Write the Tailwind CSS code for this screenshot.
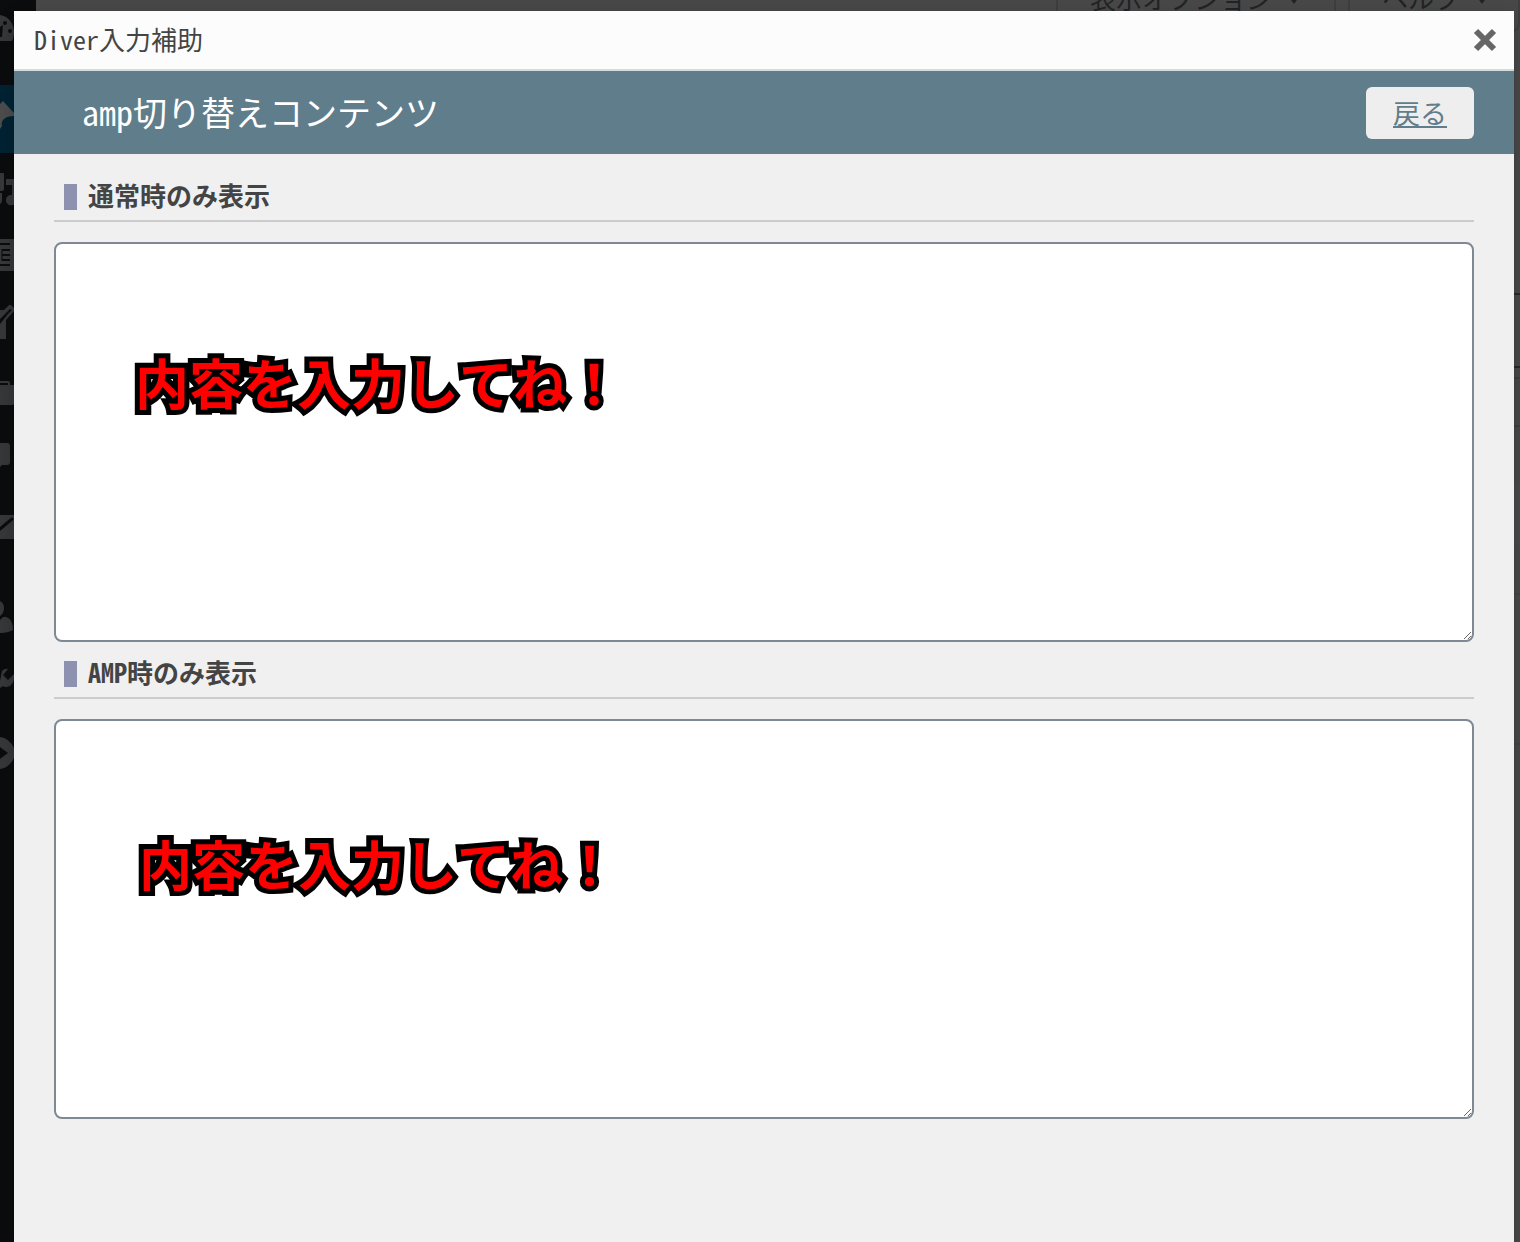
<!DOCTYPE html>
<html lang="ja">
<head>
  <meta charset="UTF-8" />
  <meta name="viewport" content="width=device-width, initial-scale=1.0"/>
  <title>Diver入力補助</title>
  <script src="https://cdn.jsdelivr.net/npm/@tailwindcss/browser@4"></script>
</head>
<body class="relative h-screen overflow-hidden bg-[#f1f1f1] text-[26px] leading-[36px] text-[#444] font-['Noto_Sans_Mono_CJK_JP','Noto_Sans_CJK_JP',sans-serif]">

  <!-- Admin screen -->
  <div class="flex h-full">
    <aside class="w-9 shrink-0 bg-[#23282d] text-[#b4b9be]">
      <ul>
        <li class="h-[63px] mb-[22px]">
          <svg class="w-[14px] h-[63px]" viewBox="0 0 14 63" fill="currentColor"><path d="M0 15C8 16 14 23 14 32C14 36 13 39 12 41H0V37H2L3 25L0 27Z"/><circle cx="5" cy="23" r="2" fill="#23282d"/><circle cx="10" cy="31" r="2" fill="#23282d"/></svg>
        </li>
        <li class="h-[68px] bg-[#0073aa] text-white">
          <svg class="w-[14px] h-[68px]" viewBox="0 0 14 68" fill="currentColor"><path d="M0 19L3 16L14 28V31C9 31 6 32 4 34C2 36 1 38 2 41L0 44Z"/></svg>
        </li>
        <li class="h-[68px]">
          <svg class="w-[14px] h-[68px]" viewBox="0 0 14 68" fill="currentColor"><path d="M0 20H3Q4 20 4 21V36Q4 38 2 38H0ZM6 26H14V52C9 53 6 51 6 47C6 44 8 42 12 42V32H6ZM0 40H2V47Q2 50 0 51Z"/></svg>
        </li>
        <li class="h-[68px]">
          <svg class="w-[14px] h-[68px]" viewBox="0 0 14 68" fill="currentColor"><path d="M0 18H14V50H0Z"/><path d="M0 23H10M2 29H10M2 34H10M2 39H10M0 44H10" stroke="#23282d" stroke-width="2"/><path d="M2 28V40" stroke="#23282d" stroke-width="1"/></svg>
        </li>
        <li class="h-[68px]">
          <svg class="w-[14px] h-[68px]" viewBox="0 0 14 68" fill="currentColor"><path d="M0 21H4L9 16L11 16L14 19V22L6 31V50H0V35L8 25L12 21L10 20L0 30Z"/></svg>
        </li>
        <li class="h-[68px]">
          <svg class="w-[14px] h-[68px]" viewBox="0 0 14 68" fill="currentColor"><path d="M0 24H8Q10 24 10 26V28H14V47Q14 48 12 48H0V28H8V26H0Z"/></svg>
        </li>
        <li class="h-[68px]">
          <svg class="w-[14px] h-[68px]" viewBox="0 0 14 68" fill="currentColor"><path d="M0 18H7Q10 18 10 21V37Q10 40 7 40H2L0 42Z"/></svg>
        </li>
        <li class="h-[68px] mb-[22px]">
          <svg class="w-[14px] h-[68px]" viewBox="0 0 14 68" fill="currentColor"><path d="M0 22H14V46H0Z"/><path d="M12 26L0 36" stroke="#23282d" stroke-width="3" stroke-linecap="round"/></svg>
        </li>
        <li class="h-[68px]">
          <svg class="w-[14px] h-[68px]" viewBox="0 0 14 68" fill="currentColor"><path d="M0 18Q4 20 4 25Q4 30 0 33ZM0 37Q3 33 6 34Q13 36 13 47Q8 50 0 50Z"/></svg>
        </li>
        <li class="h-[68px]">
          <svg class="w-[14px] h-[68px]" viewBox="0 0 14 68" fill="currentColor"><path d="M2 20Q5 17 8 18L3 24L8 29L14 23Q15 31 10 35Q5 37 3 35L0 37V30Z"/></svg>
        </li>
        <li class="h-[68px]">
          <svg class="w-[14px] h-[68px]" viewBox="0 0 14 68" fill="currentColor"><path d="M0 18Q9 19 14 29V39Q9 49 0 50V40L8 34L0 28Z"/></svg>
        </li>
      </ul>
    </aside>
    <main class="flex-1 min-w-0">
      <div class="flex justify-end gap-3 h-16 -mt-8 text-[#72777c]">
        <button class="flex items-center justify-between w-[280px] pb-[2px] px-8 border-2 border-t-0 border-[#ccd0d4] rounded-b-lg">表示オプション<svg class="w-4 h-4" viewBox="0 0 16 16" fill="currentColor"><path d="M0 3H16L8 14Z"/></svg></button>
        <button class="flex items-center justify-between w-[172px] pb-[2px] pl-8 pr-7 border-2 border-t-0 border-[#ccd0d4] rounded-b-lg">ヘルプ<svg class="w-4 h-4" viewBox="0 0 16 16" fill="currentColor"><path d="M0 3H16L8 14Z"/></svg></button>
      </div>
      <div class="mt-[261px] ml-auto w-2 h-[75px] border-y-2 border-[#7e8993]"></div>
      <div class="mt-[9px] h-[50px] border-y-2 border-[#ccd0d4]"></div>
      <div class="mt-[58px] h-[60px] bg-[#f9f9f9]"></div>
      <div class="mt-[48px] h-[152px] border-y-2 border-[#dfe1e4]"></div>
    </main>
  </div>
  <div class="absolute inset-0 bg-black/70"></div>

  <!-- Modal -->
  <div role="dialog" aria-labelledby="modal-title" class="absolute top-[11px] left-[14px] right-[6px] bottom-0 bg-[#f0f0f0] shadow-[0_5px_15px_rgba(0,0,0,0.2)]">
    <header class="flex items-center justify-between h-[60px] pl-5 pr-4 bg-[#fcfcfc] border-b-2 border-[#d5dcdf]">
      <h1 id="modal-title" class="pb-[2px]">Diver入力補助</h1>
      <button aria-label="閉じる" class="text-[#666]">
        <svg class="w-[26px] h-[26px]" viewBox="0 0 26 26" fill="none" stroke="currentColor" stroke-width="6"><path d="M4 4L22 22M22 4L4 22"/></svg>
      </button>
    </header>

    <div class="flex items-center justify-between h-[83px] pl-[68px] pr-10 bg-[#607d8b]">
      <h2 class="pb-[2px] text-[34px] leading-[48px] text-white">amp切り替えコンテンツ</h2>
      <a href="#" class="px-[27px] py-2 rounded-md bg-[#eee] text-[27px] text-[#607d8b] underline decoration-2 underline-offset-2">戻る</a>
    </div>

    <form class="px-10 pt-[22px]">
      <label for="normal-content" class="flex items-center gap-[11px] h-[46px] pl-[10px] pb-[2px] border-b-2 border-[#ccc] font-bold">
        <span class="w-[13px] h-[26px] bg-[#8f91b0]"></span><span class="pb-1">通常時のみ表示</span>
      </label>
      <textarea id="normal-content" class="block w-full h-[400px] mt-5 px-[79px] pt-[98px] resize-y rounded-lg border-2 border-[#7e8993] bg-white text-[54px] leading-[80px] font-bold text-[red] [-webkit-text-stroke:10px_black] [paint-order:stroke_fill]">内容を入力してね！</textarea>

      <label for="amp-content" class="flex items-center gap-[11px] h-[46px] mt-[11px] pl-[10px] pb-[2px] border-b-2 border-[#ccc] font-bold">
        <span class="w-[13px] h-[26px] bg-[#8f91b0]"></span><span class="pb-1">AMP時のみ表示</span>
      </label>
      <textarea id="amp-content" class="block w-full h-[400px] mt-5 px-[83px] pt-[102px] resize-y rounded-lg border-2 border-[#7e8993] bg-white text-[53px] leading-[80px] font-bold text-[red] [-webkit-text-stroke:10px_black] [paint-order:stroke_fill]">内容を入力してね！</textarea>
    </form>
  </div>

</body>
</html>
